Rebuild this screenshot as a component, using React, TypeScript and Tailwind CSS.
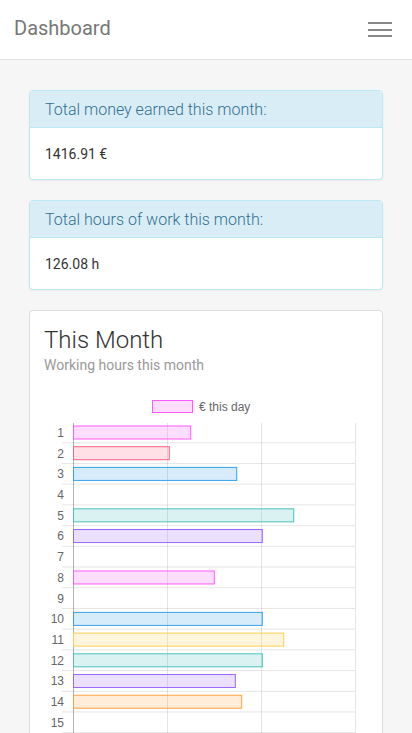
type Swatch = { stroke: string; fill: string };

const PALETTE: Swatch[] = [
  { stroke: "rgb(255,90,255)", fill: "rgba(255,99,255,0.22)" },
  { stroke: "rgb(255,99,132)", fill: "rgba(255,99,132,0.2)" },
  { stroke: "rgb(54,162,235)", fill: "rgba(54,162,235,0.2)" },
  { stroke: "rgb(255,206,86)", fill: "rgba(255,206,86,0.2)" },
  { stroke: "rgb(75,192,192)", fill: "rgba(75,192,192,0.2)" },
  { stroke: "rgb(153,102,255)", fill: "rgba(153,102,255,0.2)" },
  { stroke: "rgb(255,159,64)", fill: "rgba(255,159,64,0.2)" },
];

// bar end, page x coords
const ENDS: Record<number, number> = {
  1: 190.7, 2: 169.3, 3: 236.7, 5: 293.7, 6: 262.3, 8: 214.3,
  10: 262.3, 11: 283.7, 12: 262.3, 13: 235.3, 14: 241.7,
};

const OX = 45; // svg origin x on page
const OY = 385; // svg origin y on page
const ROW0 = 432.4;
const STEP = 20.71;

function Chart() {
  const days = Array.from({ length: 15 }, (_, i) => i + 1);
  const gridX = [73, 167, 261, 355];
  return (
    <svg width={322} height={360} className="block" style={{ fontFamily: '"Liberation Sans", Arial, sans-serif' }}>
      <rect x={107.5} y={15.5} width={40} height={12} fill={PALETTE[0].fill} stroke={PALETTE[0].stroke} />
      <text x={154} y={26} fontSize={12} fill="#666">€ this day</text>

      {days.map((d) => {
        const y = ROW0 + (d - 1) * STEP + STEP / 2 - OY;
        return <line key={"h" + d} x1={62 - OX} x2={355 - OX} y1={y} y2={y} stroke="rgba(0,0,0,0.1)" />;
      })}
      {gridX.map((x, i) => (
        <line key={"v" + x} x1={x - OX + 0.5} x2={x - OX + 0.5} y1={423 - OY} y2={360} stroke={i === 0 ? "rgba(0,0,0,0.3)" : "rgba(0,0,0,0.1)"} />
      ))}

      {days.map((d) => {
        const cy = ROW0 + (d - 1) * STEP - OY;
        const c = PALETTE[(d - 1) % 7];
        const end = ENDS[d];
        return (
          <g key={"b" + d}>
            {end && (
              <rect x={73.5 - OX} y={cy - 6.4} width={end - 73.5} height={13} fill={c.fill} stroke={c.stroke} />
            )}
            <text x={64 - OX} y={cy + 4.5} fontSize={12} fill="#666" textAnchor="end">{d}</text>
          </g>
        );
      })}
    </svg>
  );
}

function InfoPanel({ title, value }: { title: string; value: string }) {
  return (
    <div className="rounded border border-[#bce8f1] bg-white shadow-[0_1px_2px_rgba(0,0,0,0.05)] mb-5">
      <div className="bg-[#d9edf7] border-b border-[#bce8f1] px-[15px] h-[37px] flex items-center rounded-t">
        <h3 className="text-[16px] text-[#31708f] font-light pt-px">{title}</h3>
      </div>
      <div className="px-[15px] h-[51px] flex items-center text-[14px] text-[#333] pt-px">{value}</div>
    </div>
  );
}

export default function App() {
  return (
    <div className="min-h-[733px] bg-[#f6f6f6] font-['Roboto',sans-serif]">
      <nav className="h-[60px] bg-white border-b border-[#e0e0e0] flex items-center justify-between pl-[14px] pr-[20px]">
        <span className="text-[20px] text-[#777] pb-[4px]">Dashboard</span>
        <button className="flex flex-col gap-[4.5px] w-6">
          <span className="block h-0.5 w-6 bg-[#888]" />
          <span className="block h-0.5 w-6 bg-[#888]" />
          <span className="block h-0.5 w-6 bg-[#888]" />
        </button>
      </nav>

      <main className="px-[29px] pt-[30px] h-[673px] overflow-hidden">
        <InfoPanel title="Total money earned this month:" value="1416.91 €" />
        <InfoPanel title="Total hours of work this month:" value="126.08 h" />

        <div className="rounded border border-[#ddd] bg-white pl-[14px] pr-[15px] pt-[14px] h-[500px]">
          <h2 className="text-[24px] font-light text-[#333] leading-[30px]">This Month</h2>
          <p className="text-[14px] text-[#999] leading-5">Working hours this month</p>
          <div className="mt-[10px] ml-px">
            <Chart />
          </div>
        </div>
      </main>
    </div>
  );
}
